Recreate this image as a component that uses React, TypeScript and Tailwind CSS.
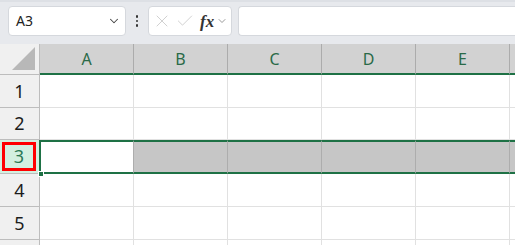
import { ChevronDown, Check, X } from 'lucide-react';

const cols = ['A', 'B', 'C', 'D', 'E', ''];
const rows = [1, 2, 3, 4, 5, 0];

const App = () => {
    return (
        <div className="w-[515px] h-[245px] overflow-hidden bg-white font-['Noto_Sans',sans-serif] select-none">
            {/* Toolbar */}
            <div className="h-[44px] bg-[#e7e9ed] border-t-2 border-[#dde0e5] flex items-start pt-[4px] pl-[8px]">
                <div className="w-[118px] h-[30px] bg-white rounded-[4px] border border-[#d5d8dd] flex items-center justify-between pl-[7px] pr-[4px]">
                    <span className="text-[14px] text-[#222] leading-none">A3</span>
                    <ChevronDown size={14} strokeWidth={1.8} className="text-[#444]" />
                </div>
                <div className="w-[22px] h-[30px] flex flex-col items-center justify-center gap-[2px]">
                    <span className="w-[2.5px] h-[2.5px] rounded-full bg-[#333]" />
                    <span className="w-[2.5px] h-[2.5px] rounded-full bg-[#333]" />
                    <span className="w-[2.5px] h-[2.5px] rounded-full bg-[#333]" />
                </div>
                <div className="w-[84px] h-[30px] bg-white rounded-[4px] border border-[#d5d8dd] flex items-center pl-[3px] pr-[2px]">
                    <X size={20} strokeWidth={1} className="text-[#c8c8c8]" />
                    <Check size={20} strokeWidth={1} className="text-[#c8c8c8] ml-[3px]" />
                    <span className="ml-[5px] text-[17px] italic font-semibold text-[#333] font-['Liberation_Serif',serif] leading-none">fx</span>
                    <ChevronDown size={12} strokeWidth={1.5} className="text-[#777] ml-[2px]" />
                </div>
                <div className="ml-[6px] flex-1 h-[30px] bg-white rounded-l-[4px] border border-r-0 border-[#d5d8dd]" />
            </div>

            {/* Column headers */}
            <div className="flex h-[31px]">
                <div className="w-[40px] shrink-0 bg-[#f0f0f0] border-r border-b border-[#bdbdbd] relative">
                    <div className="absolute right-[4px] bottom-[4px] w-0 h-0 border-l-[23px] border-l-transparent border-b-[23px] border-b-[#b8b8b8]" />
                </div>
                {cols.map((c, i) => (
                    <div
                        key={i}
                        className="w-[94px] shrink-0 bg-[#d2d2d2] border-r border-[#acacac] border-b-2 border-b-[#1e7145] flex items-center justify-center text-[16px] text-[#2a6a48]"
                    >
                        {c}
                    </div>
                ))}
            </div>

            {/* Rows */}
            {rows.map((r, ri) => {
                const active = r === 3;
                const h = r === 2 ? 'h-[32px]' : r === 3 ? 'h-[34px]' : 'h-[33px]';
                return (
                    <div key={ri} className={`flex ${h}`}>
                        <div
                            className={`w-[40px] shrink-0 border-r border-b border-[#bdbdbd] flex items-center justify-center ${
                                active ? 'bg-[#d3f0e0] p-[2px] pr-[3px]' : 'bg-[#f0f0f0]'
                            }`}
                        >
                            {active ? (
                                <div className="w-full h-full border-[3px] border-[#ff0000] flex items-center justify-center text-[18px] text-[#2b7a55]">
                                    {r}
                                </div>
                            ) : (
                                r > 0 && <span className="text-[18px] text-[#1c1c1c]">{r}</span>
                            )}
                        </div>
                        {cols.map((c, i) =>
                            active ? (
                                <div
                                    key={i}
                                    className={`w-[94px] shrink-0 border-t-2 border-b-2 border-[#1e7145] relative ${
                                        i === 0 ? 'bg-white border-l-2 border-l-[#1e7145] -ml-[1px]' : 'bg-[#c6c6c6] border-l border-l-[#adadad] pt-px'
                                    }`}
                                >
                                    {i === 0 && (
                                        <div className="absolute left-[-3px] bottom-[-5px] w-[6px] h-[6px] bg-[#1e7145] border border-white" />
                                    )}
                                </div>
                            ) : (
                                <div key={i} className="w-[94px] shrink-0 bg-white border-r border-b border-[#e1e1e1]" />
                            )
                        )}
                    </div>
                );
            })}
        </div>
    );
};

export default App;
